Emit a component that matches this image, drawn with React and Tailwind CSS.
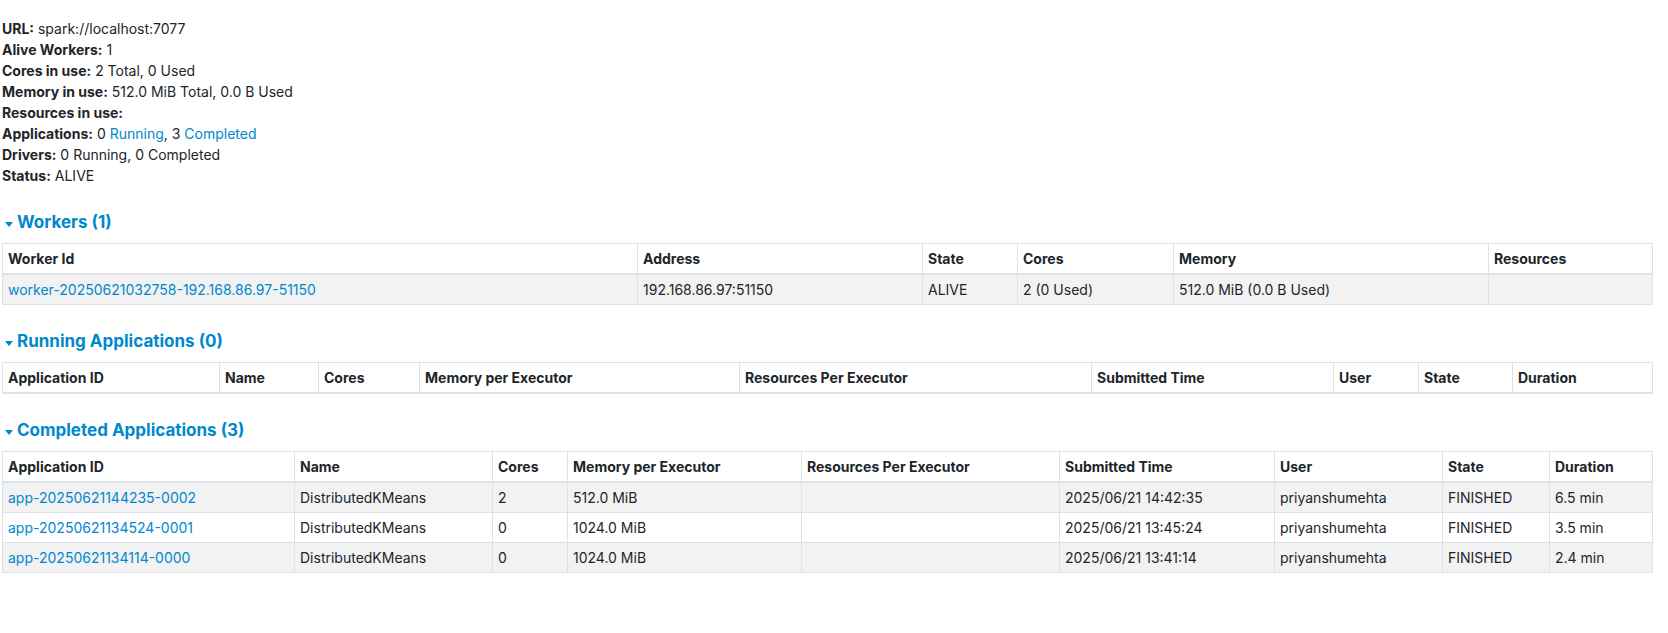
import React from 'react';

const info = [
  { label: 'URL:', value: 'spark://localhost:7077' },
  { label: 'Alive Workers:', value: '1' },
  { label: 'Cores in use:', value: '2 Total, 0 Used' },
  { label: 'Memory in use:', value: '512.0 MiB Total, 0.0 B Used' },
  { label: 'Resources in use:', value: '' },
  { label: 'Applications:', apps: true },
  { label: 'Drivers:', value: '0 Running, 0 Completed' },
  { label: 'Status:', value: 'ALIVE' },
];

const workerCols = ['w-[635px]', 'w-[285px]', 'w-[95px]', 'w-[156px]', 'w-[315px]', 'w-[164px]'];
const workerHead = ['Worker Id', 'Address', 'State', 'Cores', 'Memory', 'Resources'];
const workerRows = [
  [{ href: 'worker-20250621032758-192.168.86.97-51150' }, '192.168.86.97:51150', 'ALIVE', '2 (0 Used)', '512.0 MiB (0.0 B Used)', ''],
];

const appHead = [
  'Application ID',
  'Name',
  'Cores',
  'Memory per Executor',
  'Resources Per Executor',
  'Submitted Time',
  'User',
  'State',
  'Duration',
];
const runningCols = ['w-[217px]', 'w-[99px]', 'w-[101px]', 'w-[320px]', 'w-[352px]', 'w-[242px]', 'w-[85px]', 'w-[94px]', 'w-[140px]'];
const completedCols = ['w-[292px]', 'w-[198px]', 'w-[75px]', 'w-[234px]', 'w-[258px]', 'w-[215px]', 'w-[168px]', 'w-[107px]', 'w-[103px]'];
const completedRows = [
  [{ href: 'app-20250621144235-0002' }, 'DistributedKMeans', '2', '512.0 MiB', '', '2025/06/21 14:42:35', 'priyanshumehta', 'FINISHED', '6.5 min'],
  [{ href: 'app-20250621134524-0001' }, 'DistributedKMeans', '0', '1024.0 MiB', '', '2025/06/21 13:45:24', 'priyanshumehta', 'FINISHED', '3.5 min'],
  [{ href: 'app-20250621134114-0000' }, 'DistributedKMeans', '0', '1024.0 MiB', '', '2025/06/21 13:41:14', 'priyanshumehta', 'FINISHED', '2.4 min'],
];

function SectionTitle({ children }) {
  return (
    <h4 className="flex items-center h-[22px] mt-[25px] mb-[10px] text-[17px] font-bold leading-[22px] text-[#0088cc]">
      <span className="inline-block w-0 h-0 ml-[3px] mr-[4px] mt-[5px] border-l-[4px] border-r-[4px] border-t-[5px] border-l-transparent border-r-transparent border-t-[#0088cc]" />
      <span>{children}</span>
    </h4>
  );
}

function DataTable({ cols, head, rows }) {
  return (
    <table className="table-fixed w-[1650px] border-collapse text-[14px] text-[#212529]">
      <colgroup>
        {cols.map((c, i) => (
          <col key={i} className={c} />
        ))}
      </colgroup>
      <thead>
        <tr>
          {head.map((h) => (
            <th
              key={h}
              className="border border-b-2 border-[#dee2e6] px-[5px] py-[4px] text-left font-bold leading-[21px] align-top"
            >
              {h}
            </th>
          ))}
        </tr>
      </thead>
      <tbody>
        {rows.map((r, i) => (
          <tr key={i} className={i % 2 === 0 ? 'bg-[#f2f2f2]' : 'bg-white'}>
            {r.map((cell, j) => (
              <td key={j} className="border border-[#dee2e6] px-[5px] py-[4px] leading-[21px] align-top">
                {typeof cell === 'object' ? <a className="text-[#0088cc]">{cell.href}</a> : cell}
              </td>
            ))}
          </tr>
        ))}
      </tbody>
    </table>
  );
}

export default function App() {
  return (
    <div className="min-h-screen bg-white text-[#212529] [font-family:Inter,'Liberation_Sans',sans-serif]">
      <div className="pl-[2px] pr-[16px] pt-[18px]">
        <ul className="text-[14px] leading-[21px]">
          {info.map((row) => (
            <li key={row.label}>
              <strong className="font-bold">{row.label}</strong>{' '}
              {row.apps ? (
                <>
                  0 <a className="text-[#0088cc]">Running</a>, 3 <a className="text-[#0088cc]">Completed</a>
                </>
              ) : (
                row.value
              )}
            </li>
          ))}
        </ul>

        <SectionTitle>Workers (1)</SectionTitle>
        <DataTable cols={workerCols} head={workerHead} rows={workerRows} />

        <SectionTitle>Running Applications (0)</SectionTitle>
        <DataTable cols={runningCols} head={appHead} rows={[]} />

        <SectionTitle>Completed Applications (3)</SectionTitle>
        <DataTable cols={completedCols} head={appHead} rows={completedRows} />
      </div>
    </div>
  );
}
